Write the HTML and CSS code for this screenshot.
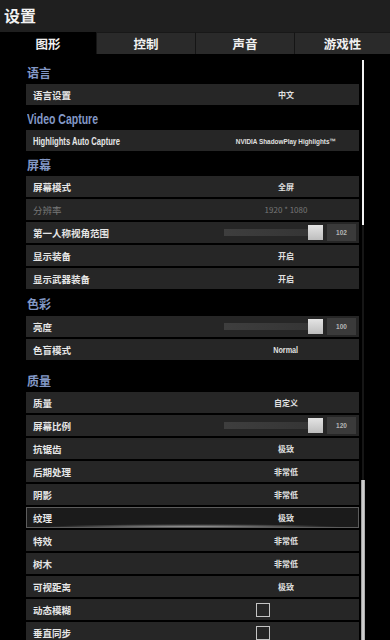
FILE: index.html
```html
<!DOCTYPE html>
<html lang="zh">
<head>
  <meta charset="UTF-8" />
  <title>设置</title>
  <link rel="stylesheet" href="styles.css">
</head>
<body>

  <div class="topbar">
    <h1>设置</h1>
  </div>

  <div class="tabs">
    <div class="tab active">图形</div>
    <div class="tab">控制</div>
    <div class="tab">声音</div>
    <div class="tab">游戏性</div>
  </div>

  <div class="panel">
    <div class="list">
      <div class="section">语言</div>
      <div class="row"><span class="label">语言设置</span><span class="value">中文</span></div>

      <div class="section"><span class="narrow">Video Capture</span></div>
      <div class="row"><span class="label"><span class="narrow">Highlights Auto Capture</span></span><span class="value small"><span class="narrow mid">NVIDIA ShadowPlay Highlights™</span></span></div>

      <div class="section">屏幕</div>
      <div class="row"><span class="label">屏幕模式</span><span class="value">全屏</span></div>
      <div class="row disabled"><span class="label">分辨率</span><span class="value">1920 * 1080</span></div>
      <div class="row">
        <span class="label">第一人称视角范围</span>
        <div class="slider"><div class="track"></div><div class="thumb"></div><div class="num">102</div></div>
      </div>
      <div class="row"><span class="label">显示装备</span><span class="value">开启</span></div>
      <div class="row"><span class="label">显示武器装备</span><span class="value">开启</span></div>

      <div class="section gap-sm">色彩</div>
      <div class="row">
        <span class="label">亮度</span>
        <div class="slider"><div class="track"></div><div class="thumb"></div><div class="num">100</div></div>
      </div>
      <div class="row"><span class="label">色盲模式</span><span class="value"><span class="narrow mid">Normal</span></span></div>

      <div class="section gap-lg">质量</div>
      <div class="row"><span class="label">质量</span><span class="value">自定义</span></div>
      <div class="row">
        <span class="label">屏幕比例</span>
        <div class="slider"><div class="track"></div><div class="thumb"></div><div class="num">120</div></div>
      </div>
      <div class="row"><span class="label">抗锯齿</span><span class="value">极致</span></div>
      <div class="row"><span class="label">后期处理</span><span class="value">非常低</span></div>
      <div class="row"><span class="label">阴影</span><span class="value">非常低</span></div>
      <div class="row selected"><span class="label">纹理</span><span class="value">极致</span></div>
      <div class="row"><span class="label">特效</span><span class="value">非常低</span></div>
      <div class="row"><span class="label">树木</span><span class="value">非常低</span></div>
      <div class="row"><span class="label">可视距离</span><span class="value">极致</span></div>
      <div class="row"><span class="label">动态模糊</span><span class="check"></span></div>
      <div class="row"><span class="label">垂直同步</span><span class="check"></span></div>
    </div>

    <div class="scrollbar">
      <div class="thumb-top"></div>
      <div class="track-mid"></div>
      <div class="thumb-bottom"></div>
    </div>
  </div>

</body>
</html>
```

FILE: styles.css
```css
body {
  margin: 0;
  width: 390px;
  height: 640px;
  overflow: hidden;
  background: #000;
  color: #e8e8e8;
  font-family: 'Noto Sans CJK SC', 'Noto Sans', sans-serif;
  font-weight: bold;
}

.topbar {
  height: 32px;
  background: #1f1f1f;
  display: flex;
  align-items: center;
  padding-left: 4px;
}

.topbar h1 {
  margin: 0;
  font-size: 16px;
  line-height: 1;
  color: #f2f2f2;
  margin-top: -2px;
}

.tabs {
  display: grid;
  grid-template-columns: 96px 99px 99px 96px;
  height: 22px;
}

.tab {
  background: #2a2a2a;
  border-left: 1px solid #151515;
  border-top: 1px solid #181818;
  display: flex;
  align-items: center;
  justify-content: center;
  font-size: 12.5px;
  color: #f0f0f0;
}

.tab.active {
  background: #000;
  border: none;
}

.panel {
  display: flex;
  padding-left: 26px;
}

.list {
  width: 333px;
  padding-top: 7px;
}

.section {
  height: 23px;
  display: flex;
  align-items: center;
  padding-left: 1px;
  font-size: 12px;
  color: #8398c6;
}

.section.gap-sm { height: 25px; }
.section.gap-lg { height: 30px; padding-top: 6px; box-sizing: border-box; }

/* condensed latin text, squeezed since no narrow face is installed */
.narrow {
  display: inline-block;
  white-space: nowrap;
  font-family: 'Liberation Sans', sans-serif;
  transform: scaleX(0.8);
  transform-origin: left center;
}

.narrow.mid {
  transform-origin: center;
}

.section .narrow {
  font-size: 15px;
  transform: scaleX(0.7);
}

.row {
  height: 21px;
  margin-bottom: 2px;
  background: #262626;
  display: flex;
  align-items: center;
  padding-left: 7px;
  box-sizing: border-box;
}

.label {
  flex: 0 0 180px;
  font-size: 9.5px;
  color: #e6e6e6;
}

.label .narrow {
  font-size: 11px;
  transform: scaleX(0.69);
}

.value {
  flex: 0 0 146px;
  text-align: center;
  font-size: 8px;
  color: #e0e0e0;
}

.value .narrow {
  font-size: 8.5px;
  transform: scaleX(0.85);
}

.value.small .narrow {
  font-size: 7.5px;
  transform: scaleX(0.85);
}

.row.disabled .label,
.row.disabled .value {
  color: #777;
  font-weight: normal;
}

.row.selected {
  background: radial-gradient(ellipse 45% 3px at 50% 100%, rgba(220,220,220,0.7), rgba(0,0,0,0) 100%), #1b1b1b;
  border: 1px solid #5c5c5c;
  padding-left: 6px;
}

.slider {
  display: flex;
  align-items: center;
  margin-left: auto;
  margin-right: 3px;
}

.track {
  width: 86px;
  height: 7px;
  background: linear-gradient(90deg, #3e3e3e, #353535);
}

.thumb {
  width: 15px;
  height: 15px;
  margin-left: -2px;
  background: linear-gradient(#e4e4e4, #bdbdbd);
}

.num {
  width: 29px;
  height: 17px;
  margin-left: 4px;
  background: #3a3a3a;
  color: #b5b5b5;
  font-size: 6.5px;
  font-family: 'Liberation Sans', sans-serif;
  display: flex;
  align-items: center;
  justify-content: center;
}

.check {
  width: 14px;
  height: 14px;
  margin-left: 43px;
  border: 1.5px solid #c4c4c4;
  box-sizing: border-box;
}

.scrollbar {
  margin-left: 2px;
  margin-top: 6px;
  width: 4px;
  display: flex;
  flex-direction: column;
  align-items: center;
}

.thumb-top {
  width: 2px;
  height: 165px;
  background: #f2f2f2;
}

.track-mid {
  width: 2px;
  height: 255px;
  background: #161616;
}

.thumb-bottom {
  width: 4px;
  height: 170px;
  background: linear-gradient(90deg, #8a8a8a, #e0e0e0 50%, #9a9a9a);
}
```
